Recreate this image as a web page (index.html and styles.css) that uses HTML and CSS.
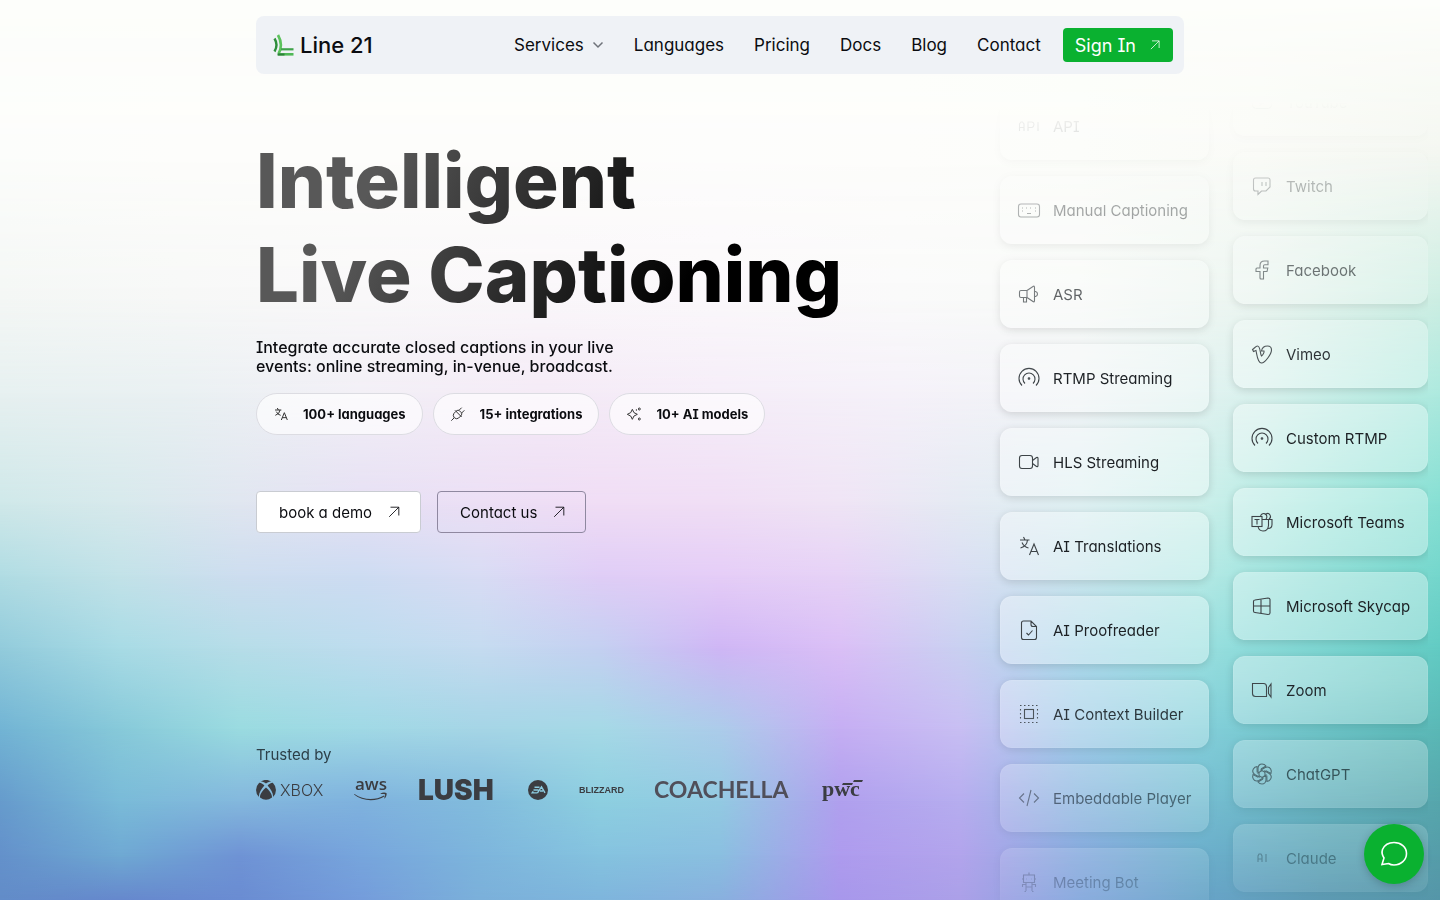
FILE: index.html
```html
<!DOCTYPE html>
<html lang="en">
<head>
    <meta charset="UTF-8">
    <meta name="viewport" content="width=device-width, initial-scale=1.0">
    <title>Line 21 - Intelligent Live Captioning</title>
    <link rel="stylesheet" href="styles.css">
</head>
<body>
    <svg class="sprite" aria-hidden="true">
        <symbol id="arrow" viewBox="0 0 16 16"><path d="M2.5 13.5l11-11M4 2.5h9.5V12"/></symbol>
        <symbol id="translate" viewBox="0 0 24 24"><path d="M3 6h9.500M6.500 3l1.500 3M5 8.500q2 4.500 6.500 5.500M10.500 6q-.5 6-7 8M12.500 21l4.500-11 4.500 11M14 17.500h6"/></symbol>
        <symbol id="cast" viewBox="0 0 24 24"><path d="M5 19.500a10 10 0 1 1 14 0M8 17.500a6 6 0 1 1 8 0"/><circle cx="12" cy="12.500" r=".8"/></symbol>
        <symbol id="camera" viewBox="0 0 24 24"><rect x="2.500" y="5.500" width="13" height="13" rx="2.500"/><path d="M15.500 10.500l4-3q1.500-.5 1.500 1v7q0 1.500-1.500 1l-4-3"/></symbol>
    </svg>

    <div class="backdrop">
        <div class="band band-1"></div>
        <div class="band band-2"></div>
        <div class="band band-3"></div>
        <div class="band band-4"></div>
        <div class="band band-5"></div>
        <div class="band band-6"></div>
        <div class="band band-7"></div>
        <div class="band band-8"></div>
        <div class="band band-9"></div>
        <div class="band band-10"></div>
    </div>

    <header class="header">
        <a class="brand" href="#">
            <svg width="22" height="22" viewBox="0 0 22 22" fill="none">
                <path d="M1.500 4.500q4 6.500 0 13" stroke="#2f8f3c" stroke-width="2.400"/>
                <path d="M5 1q5.500 10 .5 19" stroke="#5cc25c" stroke-width="2.600"/>
                <path d="M8 15.300H20.500" stroke="#3fa34a" stroke-width="2.200"/>
                <path d="M5 20.300H20.500" stroke="#4fb856" stroke-width="2.600"/>
                <path d="M4.500 20.500h7" stroke="#2c8239" stroke-width="2"/>
            </svg>
            <span>Line 21</span>
        </a>
        <nav class="nav">
            <a class="nav-drop" href="#">Services
                <svg width="12" height="12" viewBox="0 0 12 12"><path d="M1.500 3.500L6 8l4.500-4.500"/></svg>
            </a>
            <a href="#">Languages</a>
            <a href="#">Pricing</a>
            <a href="#">Docs</a>
            <a href="#">Blog</a>
            <a href="#">Contact</a>
        </nav>
        <button class="sign-in" type="button">Sign In <svg width="12" height="12"><use href="#arrow"/></svg></button>
    </header>

    <main class="hero">
        <div class="intro">
            <h1>Intelligent<br>Live Captioning</h1>
            <p class="lead">Integrate accurate closed captions in your live events: online streaming, in-venue, broadcast.</p>
            <ul class="pills">
                <li><svg class="pill-icon"><use href="#translate"/></svg>100+ languages</li>
                <li><svg class="pill-icon" viewBox="0 0 24 24"><path d="M2 22l4.500-4.500M9 8l-3 3a5 5 0 0 0 0 6l1 1a5 5 0 0 0 6 0l3-3M7.500 6.500l10 10M9 8c2-2 4-2 5-1l3 3c1 1 1 3-1 5M13 7l4.500-4.500M17 11l4.500-4.500"/></svg>15+ integrations</li>
                <li><svg class="pill-icon" viewBox="0 0 24 24"><path d="M9.500 5q1 6 7.500 7.500Q10.500 14 9.500 20 8.500 14 2 12.500 8.500 11 9.500 5z"/><circle cx="20" cy="4.500" r="1.500"/><circle cx="20" cy="19.500" r="1.500"/><circle cx="15.500" cy="6" r=".5"/></svg>10+ AI models</li>
            </ul>
            <div class="actions">
                <button class="btn btn-solid" type="button">book a demo <svg width="14" height="14"><use href="#arrow"/></svg></button>
                <button class="btn" type="button">Contact us <svg width="14" height="14"><use href="#arrow"/></svg></button>
            </div>

            <section class="trusted">
                <h2>Trusted by</h2>
                <div class="logos">
                    <svg width="66" height="20" viewBox="0 0 66 20">
                        <path d="M10 3.600C8.300 2 6 .9 4.600 1.600 6.200.5 8 0 10 0s3.800.5 5.400 1.600C14 .9 11.700 2 10 3.600zM3 2.900C5 2.600 7 4.200 8.400 5.600 5 9.200 2.600 13.500 2.900 17A10 10 0 0 1 3 2.900zM17 2.900C15 2.600 13 4.200 11.600 5.600 15 9.200 17.400 13.500 17.100 17A10 10 0 0 0 17 2.900zM10 7.600c3 2.400 6.300 6.600 6 9.900a10 10 0 0 1-12 0c-.3-3.300 3-7.500 6-9.900z"/>
                        <text class="logo-xbox" x="24" y="16">XBOX</text>
                    </svg>
                    <svg width="33" height="20" viewBox="0 0 33 20">
                        <text class="logo-aws" x="1" y="10">aws</text>
                        <path d="M.5 14c9 6.500 21 6.500 29.500 1.500l.8.800C22 22 8.500 21.500 0 14.600zM26.500 13.500c2-1.300 4.600-1.300 6-.5.500 1.500-.3 4-1.800 5.500l-.5-.3c.7-1.500 1.200-3 .8-3.900-1-.5-2.500-.5-4.300-.3z"/>
                    </svg>
                    <svg width="77" height="20" viewBox="0 0 77 20"><text class="logo-lush" x="-1" y="20">LUSH</text></svg>
                    <svg width="20" height="20" viewBox="0 0 20 20">
                        <circle cx="10" cy="10" r="10"/>
                        <path class="logo-ea" d="M6.500 7.200h5M5.500 10h5M9.500 12.900H4.200l1-1.500M9.500 12.900l4-6 3.500 6M12 11h3"/>
                    </svg>
                    <svg width="43" height="20" viewBox="0 0 43 20"><text class="logo-blizzard" x="-1" y="13">BLIZZARD</text></svg>
                    <svg width="135" height="20" viewBox="0 0 135 20"><text class="logo-coachella" x="-1" y="18">COACHELLA</text></svg>
                    <svg width="41" height="20" viewBox="0 0 41 20">
                        <text class="logo-pwc" x="0" y="16">pwc</text>
                        <path d="M21 3h10l-1 2H20zM32 0h9l-1 2h-9z"/>
                    </svg>
                </div>
            </section>
        </div>

        <div class="streams">
            <ul class="stream">
                <li class="card"><svg viewBox="0 0 24 24"><path d="M2.500 17v-7L4 8h1.500L7 10v7M2.500 13.500H7M11 17V8h4q2 .5 2 2.500T15 13.500h-4M21 8v9"/></svg>API</li>
                <li class="card"><svg viewBox="0 0 24 24"><rect x="1.500" y="6" width="21" height="13" rx="2.500"/><path d="M5 10h1M9 10h1M13 10h1M18 10h1M5 13h1M18 13h1M10 15.500h4"/></svg>Manual Captioning</li>
                <li class="card"><svg viewBox="0 0 24 24"><path d="M4 8.500h6v7H4q-1.500 0-1.500-1.500v-4q0-1.500 1.500-1.500zM10 8.500l6-4q1.500-1 1.500 1v13q0 2-1.500 1l-6-4M17.500 9.500h1q2 .5 2 2.500t-2 2.500h-1M6.500 15.500v4.500h3v-4.500"/></svg>ASR</li>
                <li class="card"><svg><use href="#cast"/></svg>RTMP Streaming</li>
                <li class="card"><svg><use href="#camera"/></svg>HLS Streaming</li>
                <li class="card"><svg><use href="#translate"/></svg>AI Translations</li>
                <li class="card"><svg viewBox="0 0 24 24"><path d="M14 3H6.500Q4.500 3 4.500 5v14.500q0 2 2 2h11q2 0 2-2V8.500zM14 3v3.500q0 2 2 2h3.500M9.500 15l2 2 4-4.500"/></svg>AI Proofreader</li>
                <li class="card"><svg viewBox="0 0 24 24"><rect x="7.500" y="7.500" width="9" height="9"/><path stroke-dasharray="1.500 2.500" d="M3 3.500h18M3 20.500h18M3.500 7v12M20.500 7v12"/></svg>AI Context Builder</li>
                <li class="card"><svg viewBox="0 0 24 24"><path d="M7 7.500L2.500 12 7 16.500M17 7.500l4.500 4.500-4.500 4.500M14 4l-4 16"/></svg>Embeddable Player</li>
                <li class="card"><svg viewBox="0 0 24 24"><path d="M6.500 5h11v7.500h-11zM12 5V2.500M5 9h1.500M17.500 9H19M9.500 9h.5M14 9h.5M9 12.500v8.500M15 12.500v8.500M9 17h6M5.500 17v-2.500H9M18.500 17v-2.500H15M7.500 21.500H9M15 21.500h1.500"/></svg>Meeting Bot</li>
            </ul>
            <ul class="stream stream-right">
                <li class="card"><svg viewBox="0 0 24 24"><rect x="2.500" y="5.500" width="19" height="13" rx="4"/><path d="M10 9l5 3-5 3z"/></svg>YouTube</li>
                <li class="card"><svg viewBox="0 0 24 24"><path d="M5.500 4H18q2 0 2 2v7l-4 4h-4.500L8 20.500V17H5.500q-2 0-2-2V6q0-2 2-2zM12 8v4M16 8v4"/></svg>Twitch</li>
                <li class="card"><svg viewBox="0 0 24 24"><path d="M18 3h-3.500Q10 3 10 7.500V10H7q-1 0-1 1v2.500h4V20q0 1 1 1h2.500v-7.500H17l.8-3.500h-4.300V8q0-1.200 1.200-1.200H18z"/></svg>Facebook</li>
                <li class="card"><svg viewBox="0 0 24 24"><path d="M2.500 7.500C4.500 6 6 4 7.500 4c3 0 2.500 8 4 10 1.500-1 3-4 2.500-5h-2.500c.5-3 3-5 6-5s4 1.500 4 4c0 4-6.500 13-10 13-4 0-4.500-8-5.500-12.500L3.500 9.500z"/></svg>Vimeo</li>
                <li class="card"><svg><use href="#cast"/></svg>Custom RTMP</li>
                <li class="card"><svg viewBox="0 0 24 24"><rect x="2" y="6.500" width="10" height="10"/><path d="M4.500 9.500h5M7 9.500v5M12 9.500h6.500v6q-.5 5.500-5.500 5.500-4 0-5-4.500M18.500 9.500H22v5q0 4-4 4M10.500 6.500a3.200 3.200 0 1 1 5.500 2.500M16 4a2.500 2.500 0 1 1 3 5"/></svg>Microsoft Teams</li>
                <li class="card"><svg viewBox="0 0 24 24"><path d="M5 6l13-2q2 0 2 1.500v13.500q0 1.500-2 1.500L5 18.500q-1.500 0-1.500-1.500V7.500Q3.500 6 5 6zM11 5v14.500M3.500 12H20"/></svg>Microsoft Skycap</li>
                <li class="card"><svg viewBox="0 0 24 24"><path d="M2.500 5.500h11q3 0 3 3v10h-11q-3 0-3-3zM18.500 9.500l2.500-3.500v13l-2.500-3.500z"/></svg>Zoom</li>
                <li class="card"><svg viewBox="0 0 24 24"><path id="petal" d="M12 8.500L8 11V6q.5-4 4-4 2.500 0 4 2L11 7"/><use href="#petal" transform="rotate(60 12 12)"/><use href="#petal" transform="rotate(120 12 12)"/><use href="#petal" transform="rotate(180 12 12)"/><use href="#petal" transform="rotate(240 12 12)"/><use href="#petal" transform="rotate(300 12 12)"/></svg>ChatGPT</li>
                <li class="card"><svg viewBox="0 0 24 24"><path d="M8 16V10l1-2h2l1 2v6M8 13h4M16 8v8"/></svg>Claude</li>
            </ul>
        </div>
    </main>

    <button class="chat" type="button" aria-label="Open chat">
        <svg width="28" height="28" viewBox="0 0 28 28"><path d="M2 24.500l2-6.500C2 15 1.500 12.500 2.500 9.500 4.500 5 9 2.500 14 2.500c7 0 12.500 4.500 12.500 11S21 25 14 25c-2 0-4-.5-5.500-1.500z"/></svg>
    </button>
</body>
</html>
```
FILE: styles.css
```css
* {
    box-sizing: border-box;
}
body {
    margin: 0;
    min-height: 100vh;
    font-family: Inter, "Liberation Sans", sans-serif;
    font-size: 15px;
    font-feature-settings: "cv11", "cv08";
    color: #0b0c10;
    overflow: hidden;
}
a {
    color: inherit;
    text-decoration: none;
}
ul {
    list-style: none;
    margin: 0;
    padding: 0;
}
button {
    font: inherit;
    font-feature-settings: inherit;
    color: inherit;
    cursor: pointer;
}
svg {
    flex: none;
}
.sprite {
    position: absolute;
    width: 0;
    height: 0;
}

/* colour mesh: each band fades in over the one above it */
.backdrop {
    position: fixed;
    inset: 0;
    z-index: -1;
    background: #fdfefb;
}
.band {
    position: absolute;
    inset: 0;
}
.band-1 {
    background: linear-gradient(to right, #fcfdfb, #fdfdfb, #fdfdfb, #fdfdfb, #fdfdfc, #fdfdfb, #fcfdfa, #fafbf7, #f4f7f1);
    mask-image: linear-gradient(transparent 0, #000 17%);
}
.band-2 {
    background: linear-gradient(to right, #f4f7f5, #f7f8f7, #f9f8f9, #faf7fa, #fbf8fb, #fafafa, #f8faf8, #ebf5f0, #cdeee3);
    mask-image: linear-gradient(transparent 17%, #000 33%);
}
.band-3 {
    background: linear-gradient(to right, #e6f0f0, #e9f0f2, #f2eff6, #f4eaf6, #f5edf8, #f5f1f9, #f0f4f6, #d8f1ed, #ace9de);
    mask-image: linear-gradient(transparent 33%, #000 44%);
}
.band-4 {
    background: linear-gradient(to right, #cfe8e9, #d7e9ec, #e0e6f0, #e6e0f4, #ecdff5, #f0ddf5, #f0def5, #efe4f5, #e5eaf3, #def0f2, #cbefea, #a8e8df, #86dfd3);
    mask-image: linear-gradient(transparent 44%, #000 56%);
}
.band-5 {
    background: linear-gradient(to right, #b0dce3, #c2e2e8, #cdddef, #cddcf2, #d8dcf4, #dfcdf6, #e5cdf7, #e6d2f6, #d9def3, #c9e5ed, #b4e9e5, #92dfd8, #74d6cc);
    mask-image: linear-gradient(transparent 56%, #000 64%);
}
.band-6 {
    background: linear-gradient(to right, #92cbdb, #a8dbe5, #b6dde8, #bddcee, #c5dbf0, #c4d0f1, #cfb6f5, #dabff6, #c9d0f1, #addaea, #99dfdf, #7ed6d2, #62cbc3);
    mask-image: linear-gradient(transparent 64%, #000 72%);
}
.band-7 {
    background: linear-gradient(to right, #72b4d4, #87c9d9, #9adbe0, #a0d9e5, #a5d5e6, #a5d9e6, #acccea, #c5aef3, #c8bef3, #9fcce8, #84cfda, #6dc4c7, #5ab8b6);
    mask-image: linear-gradient(transparent 72%, #000 81%);
}
.band-8 {
    background: linear-gradient(to right, #669bcc, #7abbd8, #84b8dd, #7fb2de, #82bcdd, #8dcfe0, #93cae2, #b0a0ee, #b6adef, #8fb9e0, #76bed2, #65b1bd, #56a6ac);
    mask-image: linear-gradient(transparent 81%, #000 89%);
}
.band-9 {
    background: linear-gradient(to right, #6491cb, #6fa9d3, #6f93d5, #77a5dc, #7db5dc, #85c3df, #8abfe0, #ae9bee, #b2a4ec, #88acde, #6cafcc, #60a6b8, #559da9);
    mask-image: linear-gradient(transparent 89%, #000 95%);
}
.band-10 {
    background: linear-gradient(to right, #628cc8, #6688cc, #6a8cd2, #749cdb, #7bb0da, #7eb5dc, #88b0de, #a797eb, #aba0e8, #82a6dc, #68a4c8, #5e9bb4, #5596a8);
    mask-image: linear-gradient(transparent 95%, #000 100%);
}

.header {
    display: flex;
    align-items: center;
    max-width: 928px;
    height: 58px;
    margin: 16px auto;
    padding: 0 11px 0 17px;
    border-radius: 8px;
    background: #eff2f6;
    font-size: 18px;
}
.brand {
    display: flex;
    align-items: center;
    gap: 5px;
    font-size: 22px;
    font-weight: 500;
}
.nav {
    display: flex;
    gap: 30px;
    margin-left: auto;
    margin-right: 22px;
    font-size: 17px;
}
.nav-drop {
    display: flex;
    align-items: center;
    gap: 8px;
}
.nav-drop svg {
    fill: none;
    stroke: #6f737a;
    stroke-width: 1.5;
}
.sign-in {
    display: flex;
    align-items: center;
    gap: 13px;
    height: 34px;
    padding: 0 12px;
    border: 0;
    border-radius: 4px;
    background: #0ab130;
    color: #fff;
}
.sign-in svg,
.btn svg {
    fill: none;
    stroke: currentColor;
}

.hero {
    display: flex;
    justify-content: space-between;
    height: calc(100vh - 90px);
    padding: 0 12px 0 calc((100% - 928px) / 2);
}
.intro {
    padding-top: 43px;
}
h1 {
    margin: 0;
    font-size: 76px;
    line-height: 94px;
    font-weight: 800;
    font-feature-settings: normal;
    background: linear-gradient(115deg, #585858 20%, #000 72%);
    background-clip: text;
    color: transparent;
}
.lead {
    max-width: 376px;
    margin: 17px 0;
    font-size: 16px;
    font-weight: 500;
    line-height: 19px;
}
.pills {
    display: flex;
    gap: 10px;
    font-size: 13px;
    font-weight: 700;
}
.pills li {
    display: flex;
    align-items: center;
    gap: 14px;
    height: 42px;
    padding: 0 16px;
    border: 1px solid #dcdce2;
    border-radius: 21px;
    background: rgba(255, 255, 255, 0.65);
}
.pill-icon {
    width: 16px;
    height: 16px;
    fill: none;
    stroke: #333;
    stroke-width: 1.5;
}
.actions {
    display: flex;
    gap: 16px;
    margin-top: 56px;
}
.btn {
    display: flex;
    align-items: center;
    gap: 15px;
    height: 42px;
    padding: 0 19px 0 22px;
    border: 1px solid #8f88a0;
    border-radius: 4px;
    background: transparent;
}
.btn-solid {
    border-color: #c9ccd2;
    background: #fff;
}
.trusted {
    margin-top: 212px;
}
.trusted h2 {
    margin: 0;
    color: #2c3f48;
    font-size: 15px;
    font-weight: 400;
    line-height: 20px;
}
.logos {
    display: flex;
    gap: 32px;
    margin-top: 15px;
}
.logos svg {
    overflow: visible;
    fill: #3b3d42;
    font-feature-settings: normal;
}
.logo-xbox {
    font-size: 16px;
    font-weight: 300;
}
.logo-aws {
    font-family: "Open Sans", "Noto Sans", sans-serif;
    font-size: 17px;
    font-weight: 600;
}
.logo-lush {
    font-size: 28px;
    font-weight: 900;
}
.logo-ea {
    fill: none;
    stroke: #8ccbe0;
    stroke-width: 1.4;
}
.logo-blizzard {
    font-family: "Liberation Sans", sans-serif;
    font-size: 9px;
    font-weight: 700;
}
.logo-coachella {
    font-family: Lato, sans-serif;
    font-size: 23px;
    font-weight: 700;
    fill: #504f5a;
}
.logo-pwc {
    font-family: "Liberation Serif", serif;
    font-size: 22px;
    font-weight: 700;
}

.streams {
    display: flex;
    gap: 24px;
    overflow: hidden;
    padding-left: 12px;
    mask-image: linear-gradient(transparent 12px, #000 290px, #000 590px, rgba(0, 0, 0, 0.2) 810px);
}
.stream {
    display: flex;
    flex-direction: column;
    gap: 16px;
    width: 209px;
    margin-top: 2px;
}
.stream-right {
    width: 195px;
    margin-top: -22px;
}
.card {
    display: flex;
    align-items: center;
    flex: none;
    gap: 12px;
    height: 68px;
    padding: 0 16px;
    border: 1px solid rgba(255, 255, 255, 0.08);
    border-radius: 12px;
    background: rgba(255, 255, 255, 0.35);
    box-shadow: 0 2px 8px rgba(0, 0, 0, 0.14);
    color: #1c2024;
    white-space: nowrap;
}
.card svg {
    width: 24px;
    height: 24px;
    fill: none;
    stroke: #3d4347;
    stroke-width: 1.1;
}

.chat {
    position: fixed;
    right: 16px;
    bottom: 16px;
    display: flex;
    align-items: center;
    justify-content: center;
    width: 60px;
    height: 60px;
    border: 0;
    border-radius: 50%;
    background: #0ab130;
    box-shadow: 0 2px 8px rgba(0, 0, 0, 0.2);
}
.chat svg {
    fill: none;
    stroke: #fff;
    stroke-width: 1.6;
}
```
